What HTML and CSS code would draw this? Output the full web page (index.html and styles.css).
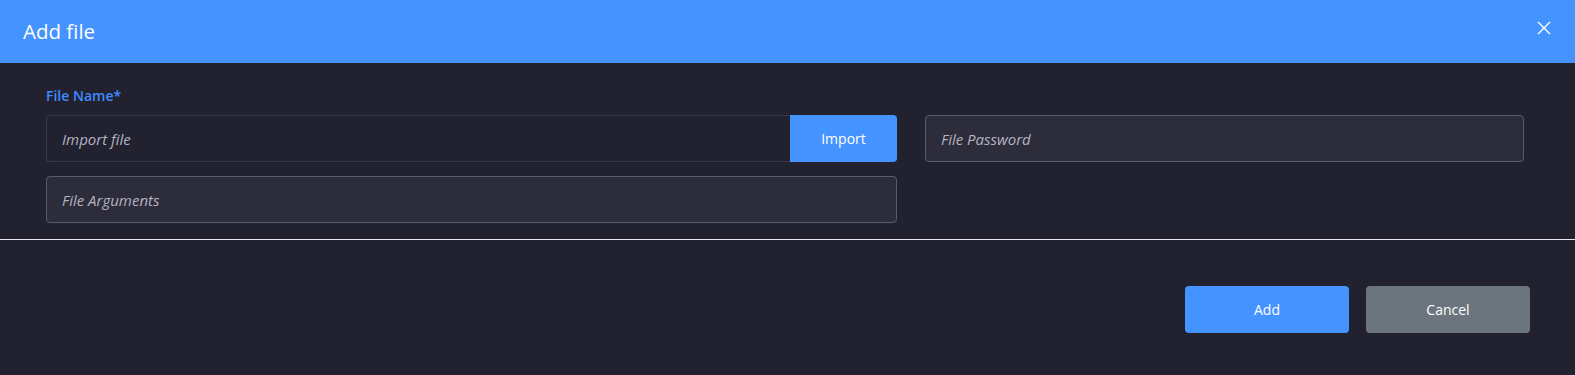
FILE: index.html
```html
<!DOCTYPE html>
<html lang="en">

<head>
    <meta charset="UTF-8">
    <meta name="viewport" content="width=device-width, initial-scale=1.0">
    <title>Add file</title>
    <link rel="stylesheet" href="styles.css">
</head>

<body>
    <div class="modal">
        <div class="modal-head">
            <h1 class="title">Add file</h1>
            <button class="close" type="button" aria-label="Close">
                <svg width="14" height="14" viewBox="0 0 14 14">
                    <path d="M1 1 L13 13 M13 1 L1 13" stroke="#fff" stroke-width="1.4" fill="none" />
                </svg>
            </button>
        </div>

        <div class="modal-body">
            <label class="label">File Name*</label>
            <div class="grid">
                <div class="group">
                    <input class="field dark" type="text" placeholder="Import file">
                    <button class="btn-import" type="button">Import</button>
                </div>
                <input class="field" type="password" placeholder="File Password">
                <input class="field" type="text" placeholder="File Arguments">
            </div>
        </div>

        <div class="modal-foot">
            <button class="btn primary" type="button">Add</button>
            <button class="btn secondary" type="button">Cancel</button>
        </div>
    </div>
</body>

</html>
```

FILE: styles.css
```css
html,
body {
    overflow: hidden;
}

body {
    margin: 0;
    background: #212130;
    font-family: "Open Sans", "Noto Sans", sans-serif;
}

.modal {
    background: #212130;
}

/* 头部 */
.modal-head {
    height: 63px;
    background: #4593ff;
    display: flex;
    align-items: center;
    justify-content: space-between;
    padding: 0 24px 0 23px;
    box-sizing: border-box;
}

.title {
    margin: 0;
    font-size: 20.5px;
    font-weight: 400;
    color: #fff;
    line-height: 1;
    padding-bottom: 1px;
}

.close {
    border: none;
    background: none;
    padding: 0;
    width: 14px;
    height: 14px;
    display: flex;
    cursor: pointer;
    margin-bottom: 7px;
}

/* 表单 */
.modal-body {
    padding: 23px 51px 16px 46px;
    border-bottom: 1px solid #e6e6ec;
}

.label {
    display: block;
    font-size: 14px;
    font-weight: 600;
    color: #3e8bff;
    line-height: 20px;
    margin-bottom: 9px;
}

.grid {
    display: grid;
    grid-template-columns: 851px 1fr;
    column-gap: 28px;
    row-gap: 14px;
}

.group {
    display: flex;
}

.field {
    height: 47px;
    box-sizing: border-box;
    border: 1px solid #5c5b6c;
    border-radius: 4px;
    background: #2d2c3a;
    padding: 0 15px;
    font-family: inherit;
    font-size: 15px;
    color: #fff;
    outline: none;
    width: 100%;
}

.field::placeholder {
    color: #b4b3c2;
    font-style: italic;
}

.field.dark {
    background: #212130;
    border-color: #393848;
    border-radius: 4px 0 0 4px;
    border-right: none;
    flex: 1;
}

.btn-import {
    width: 107px;
    height: 47px;
    border: none;
    border-radius: 0 4px 4px 0;
    background: #4593ff;
    color: #fff;
    font-family: inherit;
    font-size: 14px;
    cursor: pointer;
}

/* 底部按钮 */
.modal-foot {
    display: flex;
    justify-content: flex-end;
    gap: 17px;
    padding: 46px 45px 0 0;
}

.btn {
    width: 164px;
    height: 47px;
    border: none;
    border-radius: 4px;
    color: #fff;
    font-family: inherit;
    font-size: 14px;
    cursor: pointer;
}

.primary {
    background: #4593ff;
}

.secondary {
    background: #6c757d;
}
```
